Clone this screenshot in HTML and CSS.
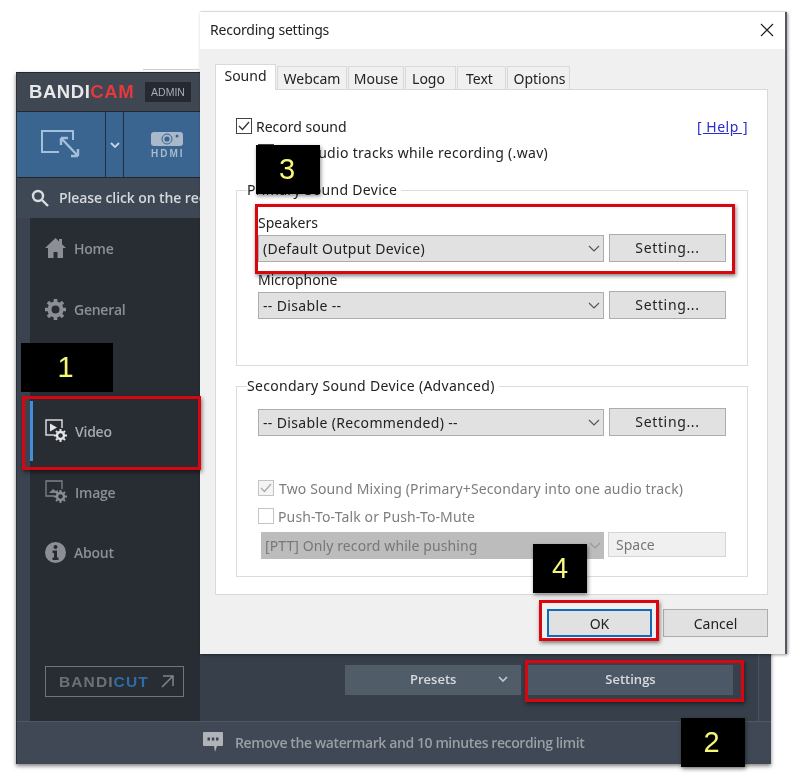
FILE: index.html
```html
<!DOCTYPE html>
<html lang="en">
<head>
<meta charset="utf-8">
<title>Recording settings</title>
<link rel="stylesheet" href="styles.css">
</head>
<body>
<main class="desktop">
  <div class="behind-edge"></div>
  <section class="bandicam">
    <header class="bc-title">
      <div class="bc-logo">BANDI<span class="red">CAM</span></div>
      <div class="bc-admin">ADMIN</div>
    </header>
    <div class="bc-toolbar">
      <div class="bc-tool bc-tool-screen">
        <svg width="40" height="30" viewBox="0 0 40 30" fill="none" stroke="#a3bfd9" stroke-width="2"><path d="M32 10V1H1v21h17"/><path d="M20 8l17 18M20 8v7M20 8h7M37 26h-7M37 26v-7" stroke-width="2.400"/></svg>
      </div>
      <div class="bc-tool bc-tool-chev">
        <svg width="10" height="6" viewBox="0 0 10 6" fill="none" stroke="#c3d3e3" stroke-width="1.800"><path d="M1 1l4 4 4-4"/></svg>
      </div>
      <div class="bc-tool bc-tool-hdmi">
        <svg width="32" height="14" viewBox="0 0 32 14"><rect width="32" height="14" rx="3" fill="#a9b9c9"/><circle cx="16" cy="7" r="5" fill="none" stroke="#3a6591" stroke-width="1"/><circle cx="16" cy="7" r="2.600" fill="#3a6591"/><circle cx="26" cy="4" r="1.500" fill="#3a6591"/></svg>
        <span class="bc-hdmi-text">HDMI</span>
      </div>
    </div>
    <div class="bc-search">
      <svg width="18" height="18" viewBox="0 0 18 18" fill="none" stroke="#d8dce0" stroke-width="2.400"><circle cx="7" cy="7" r="5"/><path d="M11 11l6 6"/></svg>
      <span>Please click on the recording mode</span>
    </div>
    <div class="bc-body">
      <nav class="bc-nav">
        <div class="nav-item">
          <svg class="nav-icon" width="21" height="22" viewBox="0 0 21 22" fill="#8b8f95"><path d="M10.500 1L0 11h3v10h5.500v-6h4v6H18V11h3l-4-3.800V2h-3v2.400z"/></svg>
          <span>Home</span>
        </div>
        <div class="nav-item">
          <svg class="nav-icon" width="21" height="21" viewBox="0 0 21 21"><circle cx="10.500" cy="10.500" r="6" fill="none" stroke="#8b8f95" stroke-width="4"/><path d="M10.500 0v4M10.500 17v4M0 10.500h4M17 10.500h4M3 3l3 3M15 15l3 3M3 18l3-3M15 6l3-3" stroke="#8b8f95" stroke-width="3.600"/></svg>
          <span>General</span>
        </div>
        <div class="nav-item nav-item-video">
          <svg class="nav-icon" width="22" height="24" viewBox="0 0 22 24" fill="none"><path d="M9 16H1V1h16v8" stroke="#d6d8db" stroke-width="1.500"/><path d="M5 4.500l7 4-7 4z" fill="#e4e6e8"/><circle cx="15.500" cy="16.500" r="3.500" stroke="#e4e6e8" stroke-width="2.400"/><path d="M15.500 10v2M15.500 21v2M9 16.500h2M20 16.500h2M11 12l1.400 1.400M18.600 19.600L20 21M11 21l1.400-1.400M18.600 13.400L20 12" stroke="#e4e6e8" stroke-width="2"/></svg>
          <span class="nav-label-active">Video</span>
        </div>
        <div class="nav-item">
          <svg class="nav-icon" width="22" height="24" viewBox="0 0 22 24" fill="none"><path d="M9 16H1V1h16v8" stroke="#7f8388" stroke-width="1.300"/><path d="M4 13l4-4 3 2 2-1v3H4z" fill="#7f8388"/><circle cx="15.500" cy="16.500" r="3.500" stroke="#8b8f95" stroke-width="2.400"/><path d="M15.500 10v2M15.500 21v2M9 16.500h2M20 16.500h2M11 12l1.400 1.400M18.600 19.600L20 21M11 21l1.400-1.400M18.600 13.400L20 12" stroke="#8b8f95" stroke-width="2"/></svg>
          <span>Image</span>
        </div>
        <div class="nav-item nav-item-about">
          <svg class="nav-icon" width="21" height="21" viewBox="0 0 21 21"><circle cx="10.500" cy="10.500" r="10.500" fill="#8b8f95"/><circle cx="10.500" cy="5" r="2" fill="#262b32"/><path d="M7.500 8.500h4.500v7h1.500V18h-6v-2.500H9V11H7.500z" fill="#262b32"/></svg>
          <span>About</span>
        </div>
        <div class="bandicut">
          <span class="bandicut-name">BANDI<span class="blue">CUT</span></span>
          <svg width="13" height="13" viewBox="0 0 13 13" fill="none" stroke="#80858b" stroke-width="1.500"><path d="M2 1h10v10M12 1L1 12"/></svg>
        </div>
      </nav>
      <div class="bc-main">
        <div class="bc-actions">
          <div class="bc-btn bc-presets">
            <span>Presets</span>
            <svg width="10" height="6" viewBox="0 0 10 6" fill="none" stroke="#c6cbd1" stroke-width="1.600"><path d="M1 1l4 4 4-4"/></svg>
          </div>
          <div class="bc-btn bc-settings">Settings</div>
        </div>
      </div>
    </div>
    <footer class="bc-footer">
      <svg width="20" height="21" viewBox="0 0 20 21"><path d="M1 0h18a1 1 0 011 1v12a1 1 0 01-1 1h-5l-2 6-1-6H1a1 1 0 01-1-1V1a1 1 0 011-1z" fill="#b0b4b9"/><rect x="4.500" y="5.500" width="2.500" height="3" fill="#3a434f"/><rect x="8.800" y="5.500" width="2.500" height="3" fill="#3a434f"/><rect x="13" y="5.500" width="2.500" height="3" fill="#3a434f"/></svg>
      <span>Remove the watermark and 10 minutes recording limit</span>
    </footer>
  </section>

  <section class="dialog">
    <header class="dlg-title">
      <span>Recording settings</span>
      <svg width="14" height="14" viewBox="0 0 14 14" fill="none" stroke="#222" stroke-width="1.200"><path d="M1 1l12 12M13 1L1 13"/></svg>
    </header>
    <div class="dlg-body">
      <div class="tabs">
        <div class="tab tab-active">Sound</div>
        <div class="tab tab-webcam">Webcam</div>
        <div class="tab tab-mouse">Mouse</div>
        <div class="tab tab-logo">Logo</div>
        <div class="tab tab-text">Text</div>
        <div class="tab tab-options">Options</div>
      </div>
      <div class="panel">
        <div class="row-record">
          <label class="check-row">
            <svg class="check" width="16" height="16" viewBox="0 0 16 16" fill="none"><rect x=".5" y=".5" width="15" height="15" fill="#fff" stroke="#444"/><path d="M3 8l3.500 3.500L13 4" stroke="#333" stroke-width="1.300"/></svg>
            <span>Record sound</span>
          </label>
          <a class="help" href="#">[ Help ]</a>
        </div>
        <label class="check-row row-wav">
          <svg class="check" width="16" height="16" viewBox="0 0 16 16" fill="none"><rect x=".5" y=".5" width="15" height="15" fill="#fff" stroke="#444"/></svg>
          <span class="wav-text">audio tracks while recording (.wav)</span>
        </label>

        <fieldset class="group group-primary">
          <legend>Primary Sound Device</legend>
          <div class="field-label">Speakers</div>
          <div class="device-row">
            <div class="combo"><span>(Default Output Device)</span><svg width="12" height="7" viewBox="0 0 12 7" fill="none" stroke="#555" stroke-width="1.200"><path d="M1 1l5 5 5-5"/></svg></div>
            <div class="btn btn-setting">Setting...</div>
          </div>
          <div class="field-label field-label-mic">Microphone</div>
          <div class="device-row">
            <div class="combo"><span>-- Disable --</span><svg width="12" height="7" viewBox="0 0 12 7" fill="none" stroke="#555" stroke-width="1.200"><path d="M1 1l5 5 5-5"/></svg></div>
            <div class="btn btn-setting">Setting...</div>
          </div>
        </fieldset>

        <fieldset class="group group-secondary">
          <legend>Secondary Sound Device (Advanced)</legend>
          <div class="device-row">
            <div class="combo"><span>-- Disable (Recommended) --</span><svg width="12" height="7" viewBox="0 0 12 7" fill="none" stroke="#555" stroke-width="1.200"><path d="M1 1l5 5 5-5"/></svg></div>
            <div class="btn btn-setting">Setting...</div>
          </div>
          <label class="check-row check-muted row-mixing">
            <svg class="check" width="16" height="16" viewBox="0 0 16 16" fill="none"><rect x=".5" y=".5" width="15" height="15" fill="#f4f4f4" stroke="#c4c4c4"/><path d="M3 8l3.500 3.500L13 4" stroke="#a8a8a8" stroke-width="1.300"/></svg>
            <span>Two Sound Mixing (Primary+Secondary into one audio track)</span>
          </label>
          <label class="check-row check-muted row-ptt">
            <svg class="check" width="16" height="16" viewBox="0 0 16 16" fill="none"><rect x=".5" y=".5" width="15" height="15" fill="#fff" stroke="#c4c4c4"/></svg>
            <span>Push-To-Talk or Push-To-Mute</span>
          </label>
          <div class="ptt-row">
            <div class="combo-disabled"><span>[PTT] Only record while pushing</span><svg width="12" height="7" viewBox="0 0 12 7" fill="none" stroke="#999" stroke-width="1.200"><path d="M1 1l5 5 5-5"/></svg></div>
            <div class="key-field">Space</div>
          </div>
        </fieldset>
      </div>
      <div class="dlg-footer">
        <div class="btn btn-ok">OK</div>
        <div class="btn btn-cancel">Cancel</div>
      </div>
    </div>
  </section>

  <div class="callout-box box-video"></div>
  <div class="callout-box box-speakers"></div>
  <div class="callout-box box-ok"></div>
  <div class="callout-box box-settings"></div>
  <div class="callout callout-1">1</div>
  <div class="callout callout-2">2</div>
  <div class="callout callout-3">3</div>
  <div class="callout callout-4">4</div>
</main>
</body>
</html>
```
FILE: styles.css
```css
* { box-sizing: border-box; }
html, body { margin: 0; padding: 0; background: #fff; }
.desktop {
  position: relative;
  width: 800px;
  height: 778px;
  overflow: hidden;
  background: #fff;
  filter: blur(0.35px);
  font-family: "Noto Sans", sans-serif;
}
.behind-edge {
  position: absolute;
  left: 143px;
  top: 69px;
  width: 56px;
  height: 1px;
  background: #d0d0d0;
}

/* Bandicam window */
.bandicam {
  position: absolute;
  left: 16px;
  top: 72px;
  width: 755px;
  height: 692px;
  display: flex;
  flex-direction: column;
  background: #3a434f;
  box-shadow: 0 2px 4px rgba(0,0,0,.5);
  font-family: "Open Sans", sans-serif;
  border-top: 1px solid #23272d;
  border-left: 1px solid #2c3138;
}
.bc-title {
  height: 39px;
  flex: none;
  display: flex;
  align-items: center;
  gap: 12px;
  padding-left: 12px;
  background: #3e4752;
  border-bottom: 1px solid #23272d;
}
.bc-logo {
  font-family: "Liberation Sans", sans-serif;
  font-weight: 700;
  font-size: 18.500px;
  color: #e8e8e8;
  letter-spacing: .55px;
  width: 104px;
  white-space: nowrap;
}
.red { color: #e8383c; }
.blue { color: #2f6ca3; }
.bc-admin {
  width: 46px;
  height: 20px;
  background: #242932;
  color: #a8adb3;
  font-family: "Liberation Sans", sans-serif;
  font-size: 10.500px;
  display: flex;
  align-items: center;
  justify-content: center;
}
.bc-toolbar {
  height: 66px;
  flex: none;
  display: flex;
  gap: 1px;
  background: #1f2e40;
  border-bottom: 1px solid #23272d;
}
.bc-tool {
  background: #3a6591;
  display: flex;
  flex-direction: column;
  align-items: center;
  justify-content: center;
}
.bc-tool-screen { width: 88px; }
.bc-tool-chev { width: 17px; }
.bc-tool-hdmi { flex: 1; align-items: flex-start; padding-left: 27px; gap: 3px; }
.bc-hdmi-text {
  font-family: "Liberation Sans", sans-serif;
  font-weight: 700;
  font-size: 10px;
  letter-spacing: 2px;
  color: #a9b9c9;
  line-height: 9px;
}
.bc-search {
  height: 40px;
  flex: none;
  display: flex;
  align-items: center;
  gap: 10px;
  padding: 0 0 1px 14px;
  color: #d5d8dc;
  font-size: 14px;
  font-weight: 600;
  letter-spacing: -.1px;
  background: #3e4854;
}
.bc-body {
  flex: none;
  height: 503px;
  margin: 0 12px 0 13px;
  display: flex;
  background: #363f4a;
  border-right: 1px solid #4a535e;
}
.bc-nav {
  width: 170px;
  flex: none;
  display: flex;
  flex-direction: column;
  background: #282d34;
  padding-top: 15px;
  position: relative;
}
.nav-item {
  height: 30px;
  display: flex;
  align-items: center;
  gap: 8px;
  padding-left: 15px;
  margin-bottom: 31px;
  color: #8d9096;
  font-size: 14px;
  font-weight: 600;
  letter-spacing: -.25px;
}
.nav-item svg { flex: none; }
.nav-item-video { margin-top: 61px; position: relative; color: #a6a9ae; }
.nav-item-about { margin-top: -1px; }
.nav-item-video::before {
  content: "";
  position: absolute;
  left: 0;
  top: -15px;
  width: 3px;
  height: 60px;
  background: #3f8fdc;
}
.bandicut {
  margin: auto 0 24px 15px;
  width: 139px;
  height: 31px;
  border: 1px solid #70757c;
  display: flex;
  align-items: center;
  justify-content: space-between;
  padding: 0 9px 0 13px;
}
.bandicut-name {
  font-family: "Liberation Sans", sans-serif;
  font-weight: 700;
  font-size: 15.500px;
  color: #6c7177;
  letter-spacing: 1.100px;
  white-space: nowrap;
}
.bc-main {
  flex: 1;
  display: flex;
  justify-content: flex-start;
  align-items: flex-end;
  padding: 0 0 26px 145px;
}
.bc-actions { display: flex; gap: 7px; }
.bc-btn {
  height: 30px;
  display: flex;
  align-items: center;
  color: #d8dbdf;
  font-size: 13px;
  font-weight: 600;
  padding-bottom: 2px;
}
.bc-presets {
  width: 176px;
  background: #515c69;
  justify-content: space-between;
  padding: 0 13px 2px 65px;
}
.bc-settings {
  width: 205px;
  background: #4c5866;
  justify-content: center;
}
.bc-footer {
  flex: 1;
  display: flex;
  align-items: center;
  gap: 12px;
  padding: 0 0 2px 186px;
  color: #9a9fa6;
  font-size: 14px;
  font-weight: 600;
  letter-spacing: -.4px;
  background: #3f4854;
  border-top: 1px solid #4d5864;
}

/* Dialog */
.dialog {
  position: absolute;
  left: 200px;
  top: 12px;
  width: 587px;
  height: 642px;
  display: flex;
  flex-direction: column;
  background: #f0f0f0;
  border-right: 2px solid #55595f;
  box-shadow: 1px 1px 3px rgba(0,0,0,.4), 0 -1px 0 #e8e8e8;
  color: #222;
  font-size: 14px;
}
.dlg-title {
  height: 37px;
  flex: none;
  background: #fff;
  display: flex;
  align-items: center;
  justify-content: space-between;
  padding: 0 11px 2px 10px;
  font-size: 14px;
  letter-spacing: -.2px;
}
.dlg-body { flex: 1; display: flex; flex-direction: column; padding: 15px 17px 0 15px; }
.tabs { display: flex; align-items: flex-end; height: 25px; gap: 1px; flex: none; position: relative; }
.tab {
  height: 23px;
  background: #f0f0f0;
  border: 1px solid #d9d9d9;
  border-bottom: 0;
  display: flex;
  align-items: center;
  justify-content: center;
}
.tab-active {
  height: 26px;
  width: 61px;
  background: #fff;
  margin-bottom: -1px;
  position: relative;
  z-index: 1;
  padding: 0 0 4px;
}
.tab-webcam { width: 70px; }
.tab-mouse { width: 56px; }
.tab-logo { width: 51px; padding-right: 4px; }
.tab-text { width: 49px; padding-right: 4px; }
.tab-options { width: 63px; padding-left: 2px; }
.panel {
  height: 506px;
  flex: none;
  background: #fff;
  border: 1px solid #d9d9d9;
  padding: 27px 19px 0 20px;
}
.row-record { display: flex; justify-content: space-between; align-items: center; height: 18px; }
.check-row { display: flex; align-items: center; gap: 4px; height: 18px; }
.check { flex: none; }
.help { color: #2a2ad0; letter-spacing: .5px; }
.row-wav { margin: 8px 0 0 22px; }
.wav-text { margin-left: 32px; letter-spacing: .3px; }
.group {
  margin: 0;
  padding: 0 21px;
  border: 1px solid #dcdcdc;
  min-width: 0;
}
.group legend {
  margin-left: -11px;
  padding: 0 4px 0 0;
  font-size: 14px;
  line-height: 20px;
  letter-spacing: .3px;
}
.group-primary { height: 186px; margin-top: 19px; padding-top: 14px; }
.group-secondary { height: 201px; margin-top: 10px; padding-top: 12px; }
.field-label { height: 20px; line-height: 18px; }
.field-label-mic { margin-top: 9px; }
.device-row { display: flex; gap: 5px; align-items: center; height: 28px; letter-spacing: .35px; }
.combo {
  width: 346px;
  height: 27px;
  flex: none;
  background: #e1e1e1;
  border: 1px solid #adadad;
  display: flex;
  align-items: center;
  justify-content: space-between;
  padding: 0 3px 0 4px;
}
.btn {
  display: flex;
  align-items: center;
  justify-content: center;
  background: #e1e1e1;
  border: 1px solid #adadad;
}
.btn-setting { width: 117px; height: 28px; letter-spacing: .65px; padding-bottom: 2px; }
.check-muted { color: #7d7d7d; letter-spacing: .13px; }
.row-mixing { margin-top: 43px; gap: 5px; }
.row-ptt { margin-top: 10px; }
.ptt-row { display: flex; gap: 4px; margin: 7px 0 0 3px; }
.combo-disabled {
  width: 343px;
  height: 27px;
  flex: none;
  background: #bcbcbc;
  display: flex;
  align-items: center;
  justify-content: space-between;
  padding: 0 3px 0 4px;
  color: #777;
  letter-spacing: .1px;
}
.key-field {
  width: 119px;
  height: 25px;
  background: #f0f0f0;
  border: 1px solid #d4d4d4;
  color: #777;
  display: flex;
  align-items: center;
  padding-left: 7px;
}
.dlg-footer { flex: 1; display: flex; justify-content: flex-end; align-items: flex-start; gap: 11px; padding-top: 14px; }
.btn-ok { width: 105px; height: 28px; border: 2px solid #0f6cbd; background: #e1e1e1; }
.btn-cancel { width: 105px; height: 28px; }

/* Annotations */
.callout-box {
  position: absolute;
  border: 3px solid #d9060f;
  box-shadow: 1px 2px 4px rgba(0,0,0,.5);
}
.box-video { left: 22px; top: 396px; width: 179px; height: 74px; }
.box-speakers { left: 255px; top: 204px; width: 480px; height: 70px; }
.box-ok { left: 539px; top: 600px; width: 120px; height: 41px; }
.box-settings { left: 525px; top: 660px; width: 219px; height: 42px; }
.callout {
  position: absolute;
  background: #000;
  color: #f6f67a;
  font-family: "Liberation Sans", sans-serif;
  font-size: 29px;
  display: flex;
  align-items: center;
  justify-content: center;
  box-shadow: 1px 2px 4px rgba(0,0,0,.45);
}
.callout-1 { left: 21px; top: 343px; width: 92px; height: 49px; box-shadow: none; padding-right: 3px; }
.callout-2 { left: 681px; top: 718px; width: 64px; height: 49px; padding-right: 3px; }
.callout-3 { left: 256px; top: 145px; width: 64px; height: 49px; padding-right: 2px; }
.callout-4 { left: 533px; top: 544px; width: 54px; height: 49px; }
```
